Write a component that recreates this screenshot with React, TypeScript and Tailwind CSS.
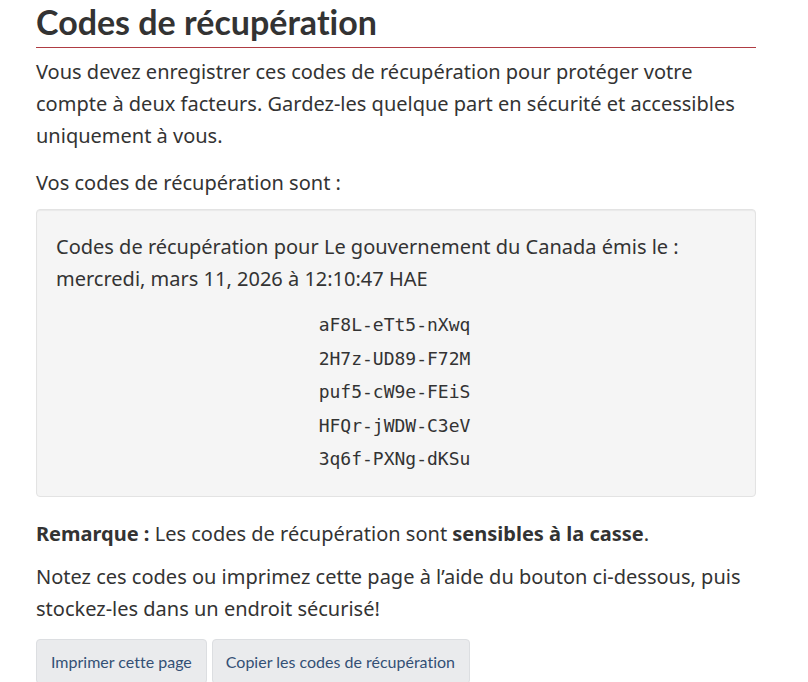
const codes = [
  "aF8L-eTt5-nXwq",
  "2H7z-UD89-F72M",
  "puf5-cW9e-FEiS",
  "HFQr-jWDW-C3eV",
  "3q6f-PXNg-dKSu",
];

const App = () => {
  return (
    <div className="bg-white min-h-[682px] overflow-hidden text-[#333] font-['Noto_Sans',sans-serif]">
      <main className="ml-[36px] w-[720px]">
        <h1 className="font-['Lato',sans-serif] font-bold text-[34px] leading-[42px] pb-[4px] border-b border-[#af3c43] mt-[1px] [font-variant-ligatures:none]">
          Codes de récupération
        </h1>

        <p className="text-[20px] leading-[32px] mt-[8px]">
          Vous devez enregistrer ces codes de récupération pour protéger votre compte à deux facteurs. Gardez-les quelque part en sécurité et accessibles uniquement à vous.
        </p>
        <p className="text-[20px] leading-[32px] mt-[15px]">Vos codes de récupération sont :</p>

        <div className="mt-[10px] bg-[#f5f5f5] border border-[#e3e3e3] rounded-[4px] shadow-[inset_0_1px_1px_rgba(0,0,0,0.05)] px-[19px] pt-[21px] pb-[20px]">
          <p className="text-[20px] leading-[32px]">
            Codes de récupération pour Le gouvernement du Canada émis le : mercredi, mars 11, 2026 à 12:10:47 HAE
          </p>
          <ul className="mt-[13px] flex flex-col items-center font-['DejaVu_Sans_Mono',monospace] text-[18px] leading-[33.5px]">
            {codes.map((c) => (
              <li key={c} className="pr-[3px]">{c}</li>
            ))}
          </ul>
        </div>

        <p className="text-[20px] leading-[32px] mt-[21px]">
          <strong className="font-bold">Remarque :</strong> Les codes de récupération sont{" "}
          <strong className="font-bold">sensibles à la casse</strong>.
        </p>
        <p className="text-[20px] leading-[32px] mt-[11px]">
          Notez ces codes ou imprimez cette page à l’aide du bouton ci-dessous, puis stockez-les dans un endroit sécurisé!
        </p>

        <div className="mt-[14px] flex gap-[5px] font-['Lato',sans-serif] text-[16px] text-[#335075] [font-variant-ligatures:none]">
          <button className="bg-[#eaebed] border border-[#dcdee1] rounded-[4px] px-[14px] py-[10px] leading-[23px]">
            Imprimer cette page
          </button>
          <button className="bg-[#eaebed] border border-[#dcdee1] rounded-[4px] pl-[13px] pr-[14px] py-[10px] leading-[23px]">
            Copier les codes de récupération
          </button>
        </div>
      </main>
    </div>
  );
};

export default App;
